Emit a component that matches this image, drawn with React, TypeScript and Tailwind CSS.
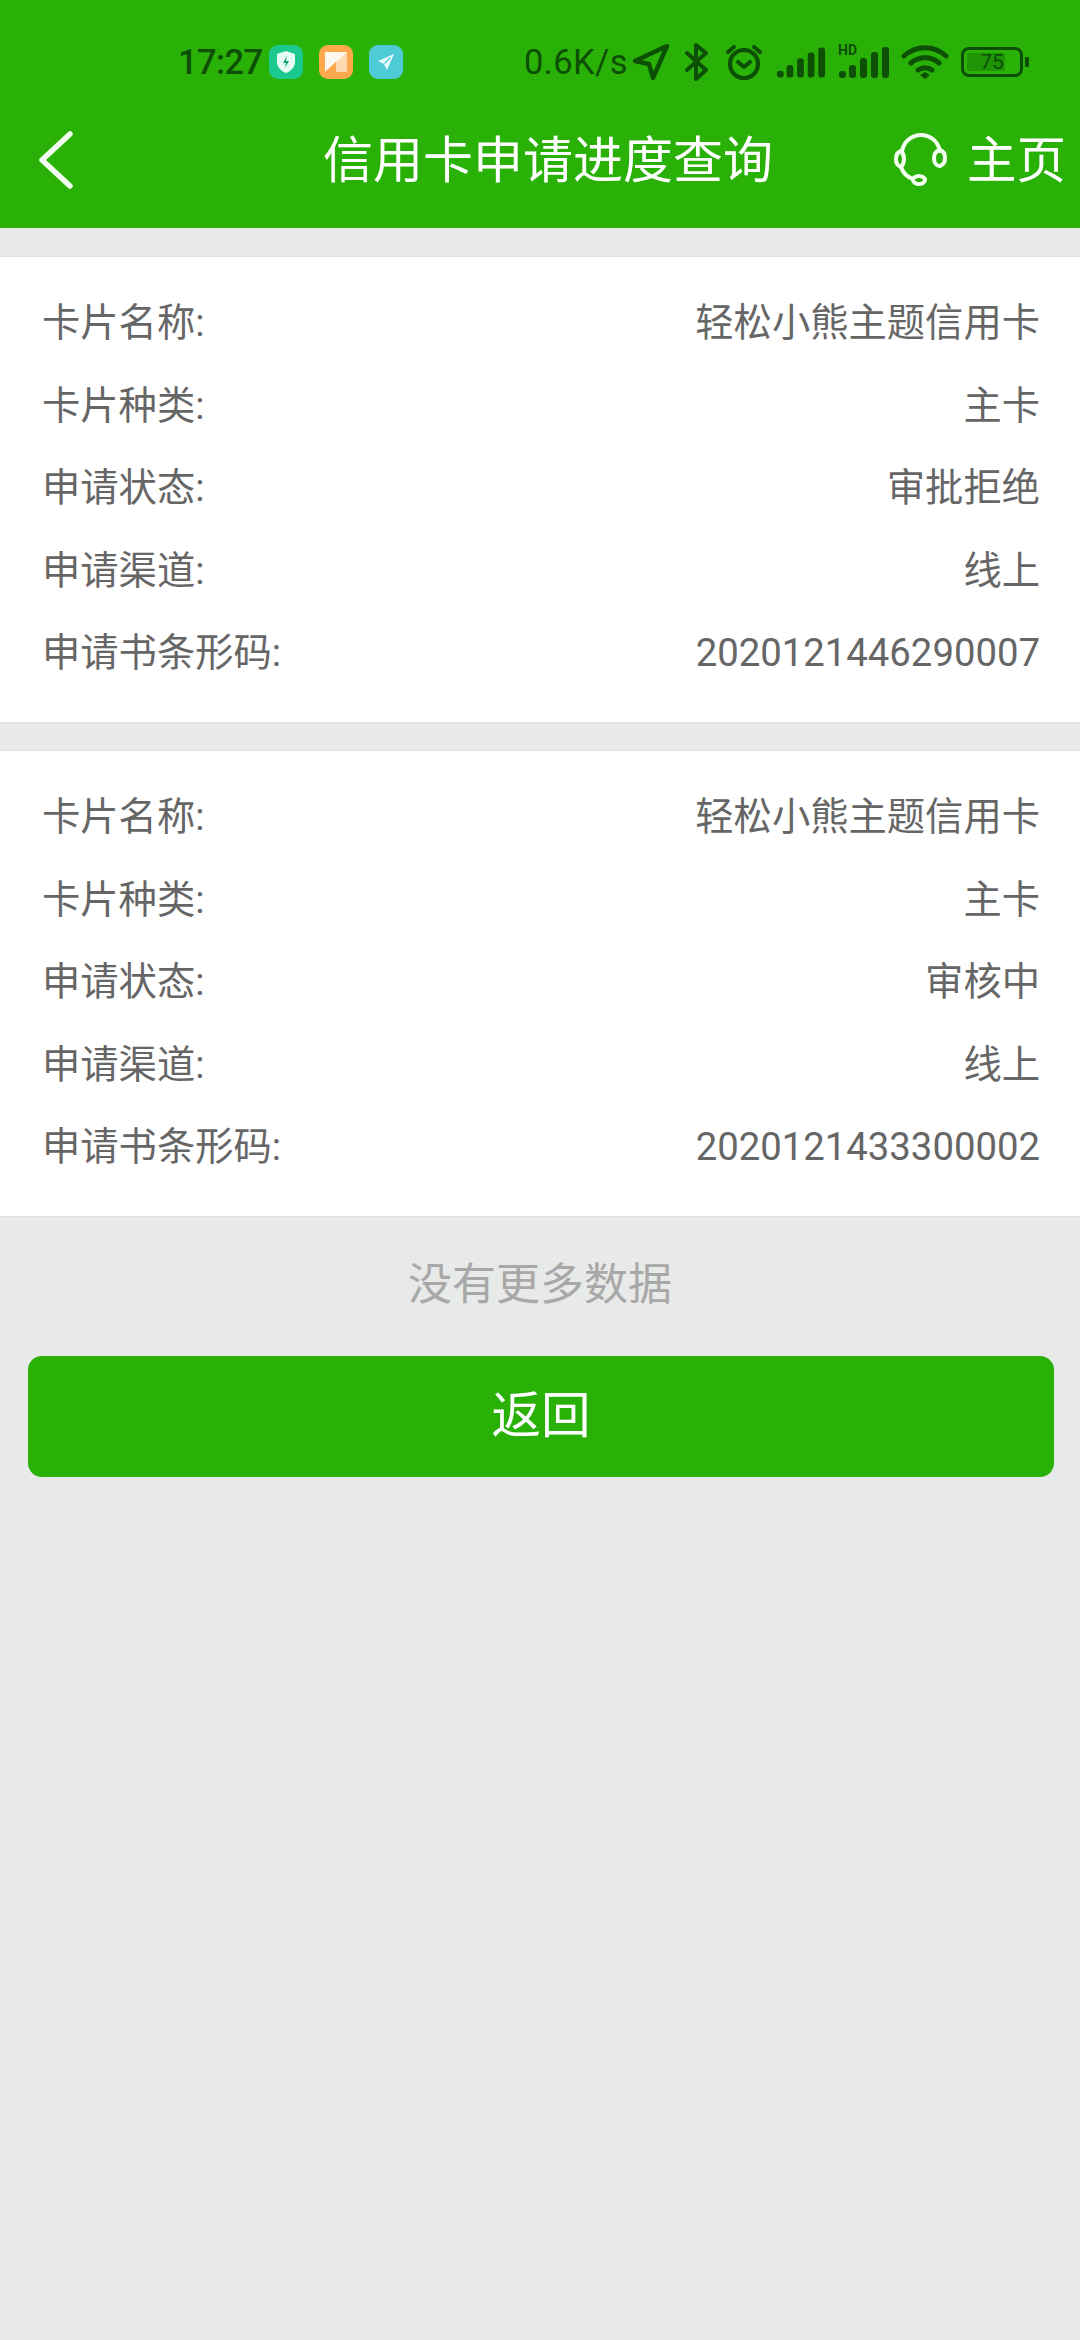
import React from "react";

const font = { fontFamily: '"Roboto","Noto Sans CJK SC",sans-serif' };
const dark = "#0c4f05";

function Bars({ hd }: { hd?: boolean }) {
  return (
    <svg width={hd ? 52 : 50} height="40" viewBox="0 0 52 40" fill={dark}>
      {hd && (
        <text x="0" y="13" fontSize="14" fontWeight="700" fontFamily="Roboto" fill={dark}>HD</text>
      )}
      <rect x="1" y="29" width="7" height="7" rx="3" />
      <rect x="11" y="23" width="7" height="13" rx="3" />
      <rect x="22" y="16" width="7" height="20" rx="3" />
      <rect x="33" y="10" width="7" height="26" rx="3" />
      <rect x="44" y="5" width="7" height="31" rx="3" />
    </svg>
  );
}

function StatusBar() {
  return (
    <div className="flex h-[84px] items-center pl-[178px] pt-[40px] text-[34.5px] leading-none" style={{ color: dark }}>
      <span className="w-[88px] font-medium tracking-[-0.6px]">17:27</span>
      <div className="ml-[3px] flex h-[34px] w-[34px] items-center justify-center rounded-[9px] bg-[#1bc98e]">
        <svg width="22" height="24" viewBox="0 0 22 24">
          <path d="M11 1l9 3v8c0 5-4 9-9 11-5-2-9-6-9-11V4z" fill="#e6fbf3" />
          <path d="M12 6l-4 7h3l-1 5 4-7h-3z" fill="#14a877" />
        </svg>
      </div>
      <div className="ml-[16px] flex h-[34px] w-[34px] items-center justify-center rounded-[9px] bg-[#ffa84c]">
        <svg width="22" height="20" viewBox="0 0 22 20">
          <rect x="0" y="0" width="22" height="20" fill="#ffd9b0" />
          <path d="M0 0h22L0 20z" fill="#fff8f0" />
          <path d="M0 20L11 10v10z" fill="#ffa84c" />
        </svg>
      </div>
      <div className="ml-[16px] flex h-[34px] w-[34px] items-center justify-center rounded-[9px] bg-[#4fcbd6]">
        <svg width="18" height="18" viewBox="0 0 18 18">
          <path d="M17 1L1 8l6 3 3 6z" fill="#e9fbfc" />
          <path d="M13.5 4.5L7.5 10.5" stroke="#4fcbd6" strokeWidth="1.2" />
        </svg>
      </div>
      <span className="ml-[121px] w-[107px] whitespace-nowrap text-[34.5px] tracking-[0.4px]">0.6K/s</span>
      <svg width="38" height="38" viewBox="0 0 38 38" fill="none" stroke={dark} strokeWidth="4.4" strokeLinejoin="round" className="ml-[1px]">
        <path d="M35 3L3 18l14 3 4 14z" />
      </svg>
      <svg width="26" height="38" viewBox="0 0 26 38" fill="none" stroke={dark} strokeWidth="4" strokeLinejoin="round" strokeLinecap="round" className="ml-[14px]">
        <path d="M3 10l19 17-10 9V2l10 8L3 27" />
      </svg>
      <svg width="40" height="38" viewBox="0 0 38 38" fill="none" stroke={dark} strokeWidth="4.2" strokeLinecap="round" strokeLinejoin="round" className="ml-[14px]">
        <circle cx="19" cy="21" r="14" />
        <path d="M13 19l6 5 6-5M3 9l6-5M35 9l-6-5" />
      </svg>
      <div className="ml-[12px] flex items-center">
        <Bars />
      </div>
      <div className="ml-[12px] flex items-center">
        <Bars hd />
      </div>
      <svg width="48" height="40" viewBox="0 0 48 40" fill="none" stroke={dark} strokeWidth="5" strokeLinecap="round" className="ml-[11px]">
        <path d="M3 14c12-11 30-11 42 0M10 21c8-7 20-7 28 0M17 28c4-3 10-3 14 0" />
        <path d="M19 33l5-3 5 3-5 4z" fill={dark} stroke="none" />
      </svg>
      <div className="relative ml-[12px] flex h-[30px] w-[62px] items-center justify-center rounded-[8px] border-[3.5px] border-[#0c4f05] text-[21px] leading-none">
        <div className="absolute bottom-[3px] left-[3px] top-[3px] w-[38px] rounded-[2px] bg-[#1f9405]" />
        <span className="relative">75</span>
      </div>
      <div className="ml-[2px] h-[10px] w-[4px] rounded-[1px] bg-[#0c4f05]" />
    </div>
  );
}

function Header() {
  return (
    <div className="bg-[#2ab108]">
      <StatusBar />
      <div className="flex h-[144px] items-center pt-[8px] text-white">
        <svg width="38" height="60" viewBox="0 0 38 60" fill="none" stroke="#f2fff0" strokeWidth="5.5" strokeLinecap="round" strokeLinejoin="round" className="ml-[37px]">
          <path d="M33 4L5 30l28 26" />
        </svg>
        <span className="ml-[248px] mt-[2px] whitespace-nowrap text-[50px] leading-[60px]">信用卡申请进度查询</span>
        <svg width="57" height="54" viewBox="0 0 57 54" fill="none" stroke="#f2fff0" strokeWidth="4" strokeLinecap="round" strokeLinejoin="round" className="ml-auto mr-[17px]">
          <path d="M9 18C11 8 19 2 28 2s17 6 19 16" />
          <path d="M8 18c-3 1-5 4-5 8s2 7 5 8c2-2 3-5 3-8s-1-6-3-8z" />
          <path d="M47 17c-4 1-6 4-6 8s2 8 6 8c3-1 5-4 5-8s-2-7-5-8z" />
          <path d="M8 34c2 6 6 10 12 12" />
          <ellipse cx="26" cy="47" rx="6" ry="4" />
        </svg>
        <span className="mr-[14px] mt-[2px] text-[49.5px] leading-[60px]">主页</span>
      </div>
    </div>
  );
}

const rowsA: [string, string][] = [
  ["卡片名称:", "轻松小熊主题信用卡"],
  ["卡片种类:", "主卡"],
  ["申请状态:", "审批拒绝"],
  ["申请渠道:", "线上"],
  ["申请书条形码:", "2020121446290007"],
];

const rowsB: [string, string][] = [
  ["卡片名称:", "轻松小熊主题信用卡"],
  ["卡片种类:", "主卡"],
  ["申请状态:", "审核中"],
  ["申请渠道:", "线上"],
  ["申请书条形码:", "2020121433300002"],
];

function Card({ rows }: { rows: [string, string][] }) {
  return (
    <div className="border-y border-[#dfdfdf] bg-white pb-[27.5px] pl-[42px] pr-[40px] pt-[25px]">
      {rows.map(([label, value]) => (
        <div key={label} className="flex h-[82.5px] items-center justify-between text-[38.3px] leading-none text-[#666666]">
          <span>{label}</span>
          <span>{value}</span>
        </div>
      ))}
    </div>
  );
}

export default function App() {
  return (
    <div className="flex min-h-[2340px] w-[1080px] flex-col bg-[#e8e9e9]" style={font}>
      <Header />
      <div className="flex flex-col gap-[27px] pt-[28px]">
        <Card rows={rowsA} />
        <Card rows={rowsB} />
      </div>
      <div className="flex h-[134px] items-center justify-center pt-[2px] text-[44px] leading-none text-[#a8a8a8]">没有更多数据</div>
      <button className="ml-[28px] mr-[26px] mt-[5px] flex h-[121px] items-center justify-center rounded-[14px] bg-[#2ab108] text-[49.5px] leading-none text-white">返回</button>
    </div>
  );
}
